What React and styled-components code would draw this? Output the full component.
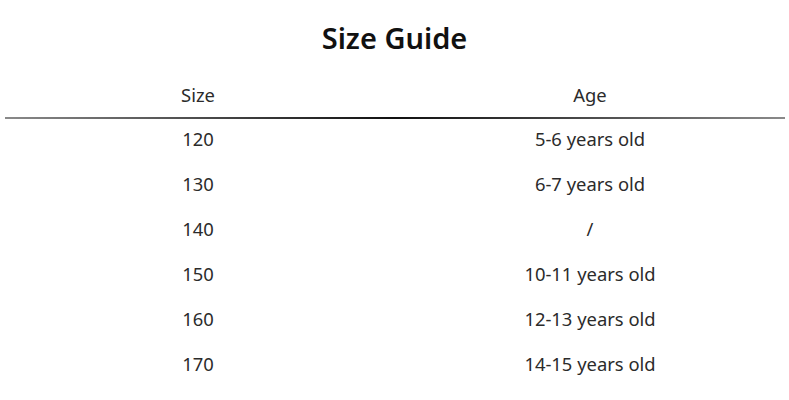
import React from 'react';
import styled, { createGlobalStyle } from 'styled-components';

const GlobalStyle = createGlobalStyle`
  html, body {
    margin: 0;
    padding: 0;
    background: #fff;
  }
  body {
    font-family: "Noto Sans", "Open Sans", sans-serif;
  }
`;

const Page = styled.div`
  width: 789px;
  height: 400px;
  padding-top: 17px;
  box-sizing: border-box;
  overflow: hidden;
`;

const Title = styled.h1`
  margin: 0;
  height: 42px;
  line-height: 42px;
  text-align: center;
  font-size: 29px;
  font-weight: 600;
  color: #111;
`;

const Table = styled.div`
  margin: 14px 3px 0 2px;
`;

const Row = styled.div`
  display: grid;
  grid-template-columns: 1fr 1fr;
  height: 45px;
  align-items: start;
  padding-top: 8px;
  box-sizing: border-box;
`;

const HeadRow = styled(Row)`
  height: 44px;
  align-items: center;
  padding-top: 0;
`;

const Divider = styled.div`
  height: 2px;
  margin: 0 1px 0 3px;
  background: linear-gradient(90deg, #8a8a8a 0%, #333 35%, #111 50%, #333 65%, #8a8a8a 100%);
`;

const Cell = styled.div`
  text-align: center;
  font-size: 18.4px;
  color: #2b2b2b;
  line-height: 24px;
`;

const rows = [
  ['120', '5-6 years old'],
  ['130', '6-7 years old'],
  ['140', '/'],
  ['150', '10-11 years old'],
  ['160', '12-13 years old'],
  ['170', '14-15 years old'],
];

const App = () => (
  <Page>
    <GlobalStyle />
    <Title>Size Guide</Title>
    <Table>
      <HeadRow>
        <Cell>Size</Cell>
        <Cell>Age</Cell>
      </HeadRow>
      <Divider />
      {rows.map(([size, age]) => (
        <Row key={size}>
          <Cell>{size}</Cell>
          <Cell>{age}</Cell>
        </Row>
      ))}
    </Table>
  </Page>
);

export default App;
